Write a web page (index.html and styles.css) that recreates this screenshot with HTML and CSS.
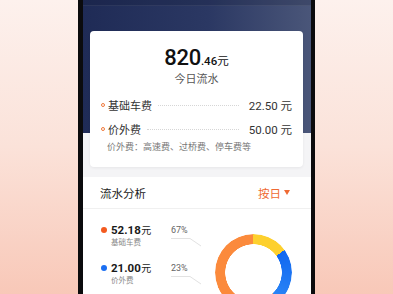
FILE: index.html
```html
<!DOCTYPE html>
<html>
<head>
<meta charset="utf-8">
<link rel="stylesheet" href="styles.css">
</head>
<body>
<div class="phone">
  <div class="screen">
    <div class="top">
      <div class="statusbar"></div>
      <div class="card">
        <div class="amount"><span class="int">820</span><span class="dec">.46</span><span class="yuan">元</span></div>
        <div class="amount-label">今日流水</div>
        <div class="row">
          <span class="ring"></span><span class="row-name">基础车费</span><span class="dots"></span><span class="row-val">22.50 元</span>
        </div>
        <div class="row row2">
          <span class="ring"></span><span class="row-name">价外费</span><span class="dots"></span><span class="row-val">50.00 元</span>
        </div>
        <div class="note">价外费：高速费、过桥费、停车费等</div>
      </div>
    </div>
    <div class="panel">
      <div class="panel-head">
        <span class="panel-title">流水分析</span>
        <span class="panel-sel">按日<span class="tri"></span></span>
      </div>
      <div class="panel-body">
        <div class="legend">
          <div class="leg-item">
            <div class="leg-val"><span class="dot orange"></span>52.18<span class="leg-unit">元</span></div>
            <div class="leg-name">基础车费</div>
          </div>
          <div class="leg-item">
            <div class="leg-val"><span class="dot blue"></span>21.00<span class="leg-unit">元</span></div>
            <div class="leg-name">价外费</div>
          </div>
        </div>
        <div class="pcts">
          <div class="pct">
            <div class="pct-text">67%</div>
            <svg class="pct-line" width="32" height="12" viewBox="0 0 32 12"><polyline points="0,2.5 19,2.5 30,10" fill="none" stroke="#e2e2e2" stroke-width="1"/></svg>
          </div>
          <div class="pct">
            <div class="pct-text">23%</div>
            <svg class="pct-line" width="32" height="12" viewBox="0 0 32 12"><polyline points="0,2.5 19,2.5 30,10" fill="none" stroke="#e2e2e2" stroke-width="1"/></svg>
          </div>
        </div>
        <div class="donut"></div>
      </div>
    </div>
  </div>
</div>
</body>
</html>
```
FILE: styles.css
```css
html, body {
  margin: 0;
  padding: 0;
}
body {
  width: 393px;
  height: 294px;
  overflow: hidden;
  background: linear-gradient(to bottom, #fdf1ed 0%, #fbe2d9 50%, #f8c8b8 100%);
  font-family: "Noto Sans CJK SC", "Noto Sans", sans-serif;
}
.phone {
  margin-left: 78px;
  width: 228px;
  height: 294px;
  overflow: hidden;
  border-left: 5px solid #0b0b0d;
  border-right: 4px solid #0b0b0d;
  background: #fff;
}
.screen {
  display: flex;
  flex-direction: column;
}
.top {
  background:
    linear-gradient(to right, #1f2b56 0%, #2b3863 55%, #4a5679 100%) top left / 100% 133px no-repeat,
    #f4f4f6;
  padding-bottom: 10px;
}
.statusbar {
  height: 5px;
  background: rgba(10, 16, 40, 0.18);
  border-bottom: 1px solid rgba(255, 255, 255, 0.07);
}
.card {
  margin: 25px 8px 0 7px;
  background: #fff;
  border-radius: 4px;
  box-shadow: 0 1px 3px rgba(0, 0, 0, 0.06);
  padding: 14px 11px 14px 11px;
}
.amount {
  text-align: center;
  line-height: 26px;
  height: 26px;
  color: #111;
  font-family: "Roboto", "Noto Sans", sans-serif;
}
.int {
  font-size: 22px;
  font-weight: 500;
  letter-spacing: -0.3px;
}
.dec {
  font-size: 11.5px;
  font-weight: 500;
}
.yuan {
  font-size: 11.5px;
  font-family: "Noto Sans CJK SC", sans-serif;
}
.amount-label {
  text-align: center;
  font-size: 11px;
  line-height: 14px;
  color: #555;
}
.row {
  margin-top: 10px;
  height: 20px;
  display: flex;
  align-items: center;
  font-size: 11px;
  color: #333;
}
.row2 {
  margin-top: 4px;
}
.ring {
  width: 2px;
  height: 2px;
  border: 1px solid #f07a3c;
  border-radius: 50%;
  margin-right: 3px;
}
.row-name {
  line-height: 20px;
}
.dots {
  flex: 1;
  border-top: 1px dotted #d6d6d6;
  margin: 1px 10px 0 6px;
}
.row-val {
  font-family: "Roboto", "Noto Sans", "Noto Sans CJK SC", sans-serif;
  font-size: 11.5px;
  color: #333;
}
.note {
  margin-top: 2px;
  padding-left: 6px;
  font-size: 9px;
  line-height: 12px;
  color: #777;
}
.panel {
  background: #fff;
}
.panel-head {
  height: 31px;
  display: flex;
  align-items: center;
  justify-content: space-between;
  padding: 0 21px 0 17px;
  border-bottom: 1px solid #f0f0f0;
}
.panel-title {
  font-size: 11.5px;
  color: #222;
}
.panel-sel {
  font-size: 11.5px;
  color: #ef6a33;
  display: flex;
  align-items: center;
}
.tri {
  width: 0;
  height: 0;
  border-left: 3.5px solid transparent;
  border-right: 3.5px solid transparent;
  border-top: 5px solid #ef6a33;
  margin-left: 3px;
}
.panel-body {
  display: flex;
  padding: 14px 19px 0 17px;
}
.legend {
  width: 71px;
}
.leg-item {
  margin-bottom: 14px;
}
.leg-val {
  display: flex;
  align-items: center;
  font-family: "Roboto", "Noto Sans", sans-serif;
  font-size: 11.5px;
  font-weight: 700;
  line-height: 14px;
  color: #1a1a1a;
}
.leg-unit {
  font-family: "Noto Sans CJK SC", sans-serif;
  font-size: 10px;
  font-weight: 400;
  margin-left: 0.5px;
}
.dot {
  width: 6px;
  height: 6px;
  border-radius: 50%;
  margin-left: 1px;
  margin-right: 4px;
}
.orange { background: #f35a1f; }
.blue { background: #1b6ff2; }
.leg-name {
  padding-left: 11px;
  font-size: 7.5px;
  line-height: 10px;
  color: #888;
}
.pcts {
  width: 44px;
  padding-top: 2px;
}
.pct {
  height: 38px;
}
.pct-text {
  font-family: "Roboto", "Noto Sans", sans-serif;
  font-size: 9px;
  line-height: 11px;
  color: #666;
}
.pct-line {
  display: block;
}
.donut {
  margin-top: 11px;
  width: 77px;
  height: 77px;
  border-radius: 50%;
  background: conic-gradient(#fdd02e 0deg 54deg, #1167f0 54deg, #2a85f6 137deg, #fb8a3c 137deg 360deg);
  -webkit-mask: radial-gradient(circle, transparent 28px, #000 28.5px);
  mask: radial-gradient(circle, transparent 28px, #000 28.5px);
}
```
